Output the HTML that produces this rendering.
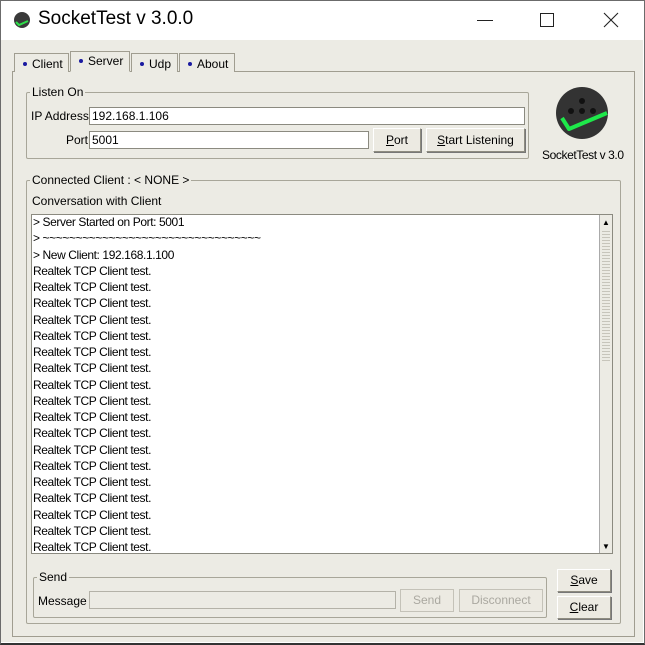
<!DOCTYPE html>
<html><head><meta charset="utf-8"><style>
*{box-sizing:border-box;margin:0;padding:0}
body{width:645px;height:645px;background:#fff;font-family:"Liberation Sans",Arial,sans-serif;font-size:12px;color:#000;position:relative;overflow:hidden}
.a{position:absolute}
.win{left:0;top:0;width:645px;height:645px;border:1px solid #6b6b6b;border-bottom:2px solid #333}
.body{left:1px;top:40px;width:642px;height:602px;background:#ecebe4}
.tab{background:#ecebe4;border:1px solid #a09d90;border-bottom:none;height:19px;top:53px;padding:3px 0 0 8px;font-size:12px}
.tab .d{display:inline-block;width:4px;height:4px;border-radius:50%;background:#1a1aa0;margin-right:5px;vertical-align:2px}
.grp{border:1px solid #a8a699;border-radius:2px}
.lg{background:#ecebe4;padding:0 2px;font-size:12px}
.fld{background:#fff;border:1px solid #8b8a80;padding:1px 2px;font-size:12px;line-height:14px}
.btn{border:1px solid #8e8c80;border-top-color:#fff;border-left-color:#fff;box-shadow:1px 1px 0 #777;background:#eceae2;text-align:center;font-size:12px}
.ln{left:33px;font-size:12px;line-height:16.25px;letter-spacing:-0.4px}
</style></head><body>
<div class="a win"></div>
<svg class="a" style="left:13px;top:11px" width="18" height="18" viewBox="0 0 18 18"><circle cx="9" cy="9" r="8" fill="#3a3a3a"/><path d="M3 11 L6 14 L15 10" stroke="#2ee04a" stroke-width="2" fill="none"/></svg>
<div class="a" style="left:38px;top:8px;font-size:19px">SocketTest v 3.0.0</div>
<div class="a" style="left:477px;top:20px;width:16px;height:1px;background:#222"></div>
<div class="a" style="left:540px;top:13px;width:14px;height:14px;border:1px solid #222"></div>
<svg class="a" style="left:603px;top:12px" width="16" height="16"><path d="M1 1L15 15M15 1L1 15" stroke="#222" stroke-width="1.1"/></svg>
<div class="a body"></div>
<div class="a" style="left:12px;top:71px;width:623px;height:566px;border:1px solid #a09d90;background:#ecebe4"></div>
<div class="a tab" style="left:14px;width:55px"><span class="d"></span>Client</div>
<div class="a tab" style="left:70px;width:60px;top:51px;height:21px;padding-top:2px;border-bottom:1px solid #ecebe4;z-index:2"><span class="d"></span>Server</div>
<div class="a tab" style="left:131px;width:47px"><span class="d"></span>Udp</div>
<div class="a tab" style="left:179px;width:56px"><span class="d"></span>About</div>
<div class="a grp" style="left:26px;top:92px;width:503px;height:67px"></div>
<div class="a lg" style="left:30px;top:85px">Listen On</div>
<div class="a" style="left:31px;top:109px">IP Address</div>
<div class="a fld" style="left:89px;top:107px;width:436px;height:18px">192.168.1.106</div>
<div class="a" style="left:66px;top:133px">Port</div>
<div class="a fld" style="left:89px;top:131px;width:280px;height:18px">5001</div>
<div class="a btn" style="left:373px;top:128px;width:48px;height:24px;line-height:22px"><u>P</u>ort</div>
<div class="a btn" style="left:426px;top:128px;width:99px;height:24px;line-height:22px"><u>S</u>tart Listening</div>
<svg class="a" style="left:555px;top:86px" width="56" height="56" viewBox="0 0 56 56"><circle cx="27" cy="27" r="26" fill="#333"/><circle cx="27" cy="15" r="3" fill="#111"/><circle cx="16" cy="25" r="3" fill="#111"/><circle cx="27" cy="25" r="3" fill="#111"/><circle cx="38" cy="25" r="3" fill="#111"/><path d="M7 32 L14 43 L52 27" stroke="#1ee84a" stroke-width="4" fill="none" stroke-linejoin="round"/></svg>
<div class="a" style="left:542px;top:148px;letter-spacing:-0.4px">SocketTest v 3.0</div>
<div class="a grp" style="left:26px;top:180px;width:595px;height:444px"></div>
<div class="a lg" style="left:30px;top:173px">Connected Client : &lt; NONE &gt;</div>
<div class="a" style="left:32px;top:194px">Conversation with Client</div>
<div class="a" style="left:31px;top:214px;width:582px;height:340px;background:#fff;border:1px solid #8b8a80"></div>
<div class="a" style="left:599px;top:215px;width:13px;height:338px;background:#ecebe4;border-left:1px solid #aaa"></div>
<div class="a" style="left:602px;top:229px;width:8px;height:133px;background:repeating-linear-gradient(#ecebe4 0 2px,#c7c5bb 2px 3px)"></div>
<div class="a" style="left:602px;top:218px;font-size:8px">▲</div>
<div class="a" style="left:602px;top:542px;font-size:8px">▼</div>
<div class="a ln" style="top:214px;width:560px">&gt; Server Started on Port: 5001<br>&gt; ~~~~~~~~~~~~~~~~~~~~~~~~~~~~~~~~~<br>&gt; New Client: 192.168.1.100<br>Realtek TCP Client test.<br>Realtek TCP Client test.<br>Realtek TCP Client test.<br>Realtek TCP Client test.<br>Realtek TCP Client test.<br>Realtek TCP Client test.<br>Realtek TCP Client test.<br>Realtek TCP Client test.<br>Realtek TCP Client test.<br>Realtek TCP Client test.<br>Realtek TCP Client test.<br>Realtek TCP Client test.<br>Realtek TCP Client test.<br>Realtek TCP Client test.<br>Realtek TCP Client test.<br>Realtek TCP Client test.<br>Realtek TCP Client test.<br>Realtek TCP Client test.</div>
<div class="a grp" style="left:33px;top:577px;width:514px;height:41px"></div>
<div class="a lg" style="left:37px;top:570px">Send</div>
<div class="a" style="left:38px;top:594px">Message</div>
<div class="a" style="left:89px;top:591px;width:307px;height:18px;border:1px solid #b4b2a8;background:#ecebe4"></div>
<div class="a btn" style="left:400px;top:589px;width:54px;height:23px;line-height:21px;color:#aaa8a0;box-shadow:none;border-color:#c4c2b8">Send</div>
<div class="a btn" style="left:459px;top:589px;width:84px;height:23px;line-height:21px;color:#aaa8a0;box-shadow:none;border-color:#c4c2b8">Disconnect</div>
<div class="a btn" style="left:557px;top:569px;width:54px;height:23px;line-height:21px"><u>S</u>ave</div>
<div class="a btn" style="left:557px;top:596px;width:54px;height:23px;line-height:21px"><u>C</u>lear</div>
</body></html>
